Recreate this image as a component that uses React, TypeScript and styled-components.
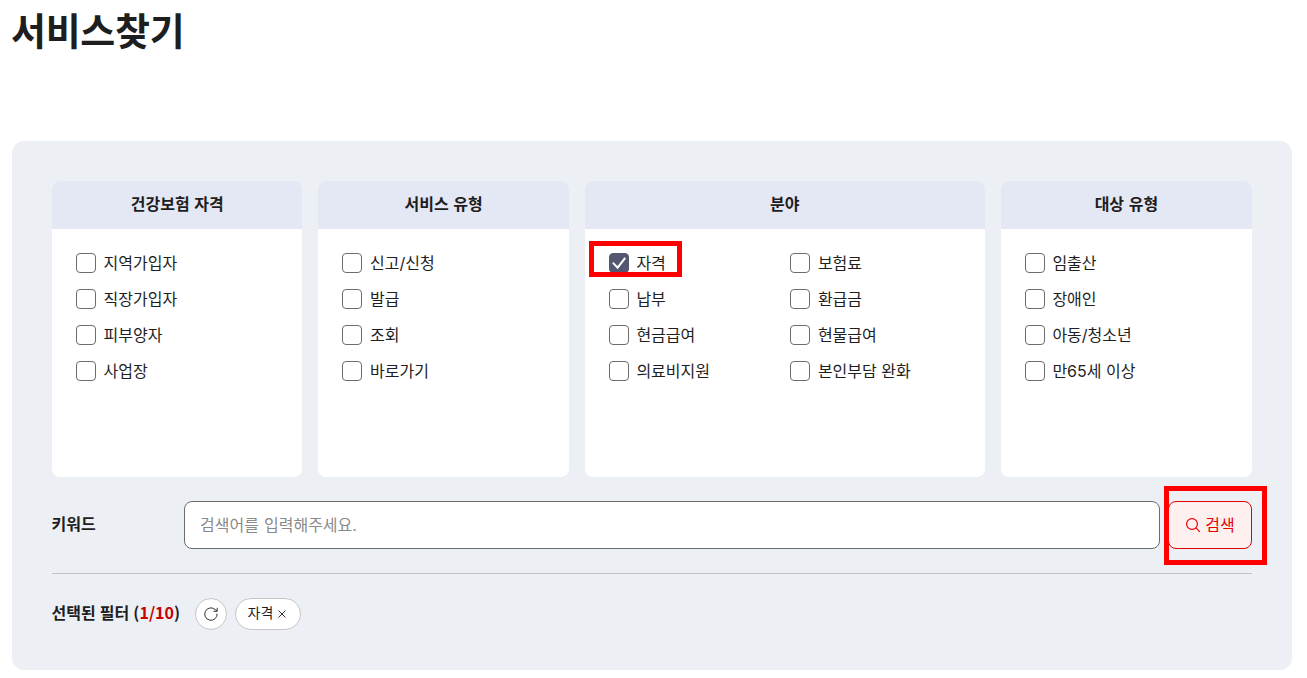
import React, { useState } from 'react'
import styled, { createGlobalStyle } from 'styled-components'

const GlobalStyle = createGlobalStyle`
  * {
    box-sizing: border-box;
  }

  body {
    margin: 0;
    background-color: #ffffff;
    color: #1e1e1e;
    font-family: Inter, 'Noto Sans CJK KR', sans-serif;
    font-size: 16px;
    line-height: 24px;
  }

  button,
  input {
    font-family: inherit;
    font-size: inherit;
  }
`

const Page = styled.main`
  width: 1280px;
  height: 678px;
  margin-left: 12px;
`

const PageTitle = styled.h1`
  height: 141px;
  margin: 0;
  font-family: 'Noto Sans CJK KR', sans-serif;
  font-size: 38px;
  font-weight: 700;
  letter-spacing: -0.3px;
  line-height: 57px;
  text-indent: -1px;
`

const FilterPanel = styled.section`
  height: 529px;
  padding: 40px;
  border-radius: 12px;
  background-color: #ecf0f5;
`

const GroupList = styled.div`
  display: grid;
  grid-template-columns: 250.4px 250.4px 400px 1fr;
  column-gap: 16px;
`

const Group = styled.fieldset`
  min-width: 0;
  height: 296px;
  margin: 0;
  padding: 0;
  border: none;
  border-radius: 8px;
  background-color: #ffffff;
  overflow: hidden;
`

const GroupTitle = styled.div`
  height: 48px;
  background-color: #e4e7f4;
  font-weight: 700;
  line-height: 46px;
  text-align: center;
  word-spacing: 0.8px;
`

const OptionGrid = styled.div<{ $wide?: boolean }>`
  display: grid;
  grid-template-columns: ${({ $wide }) => ($wide ? '181.5px 1fr' : '1fr')};
  grid-auto-rows: 24px;
  row-gap: 12px;
  padding: 22px 0 0 24px;
`

const OptionLabel = styled.label`
  position: relative;
  display: flex;
  align-items: center;
  gap: 7.6px;
  width: max-content;
  white-space: nowrap;

  input {
    appearance: none;
    width: 20px;
    height: 20px;
    margin: 0;
    border: 1px solid #6d6d6d;
    border-radius: 4px;
    background-color: #ffffff;
  }

  input:checked {
    border-color: #555770;
    background-color: #555770;
  }

  svg {
    position: absolute;
    top: 2px;
    left: 0;
    pointer-events: none;
  }

  span {
    padding-bottom: 1px;
  }
`

const Marker = styled.div<{
  $top: number
  $left: number
  $width: number
  $height: number
}>`
  position: absolute;
  top: ${({ $top }) => $top}px;
  left: ${({ $left }) => $left}px;
  width: ${({ $width }) => $width}px;
  height: ${({ $height }) => $height}px;
  border: 5px solid #ff0000;
  pointer-events: none;
`

const KeywordRow = styled.form`
  display: flex;
  align-items: center;
  height: 97px;
  padding: 24px 0;
  border-bottom: 1px solid #c0c4c9;
`

const KeywordLabel = styled.label`
  width: 132px;
  padding-bottom: 2px;
  font-weight: 700;
  text-indent: -0.5px;
`

const KeywordInput = styled.input`
  width: 976px;
  height: 48px;
  margin-right: 8px;
  padding: 0 15px 1px;
  border: 1px solid #6d6d6d;
  border-radius: 8px;
  background-color: #ffffff;
  outline: none;

  &::placeholder {
    color: #8a8a8a;
    opacity: 1;
    word-spacing: 0.6px;
  }
`

const SearchButton = styled.button`
  position: relative;
  display: flex;
  align-items: center;
  justify-content: center;
  gap: 4px;
  width: 84px;
  height: 48px;
  padding: 0;
  border: 1px solid #e60000;
  border-radius: 8px;
  background-color: #fff0f0;
  color: #e60000;

  span {
    padding-bottom: 3px;
  }
`

const SelectedRow = styled.div`
  display: flex;
  align-items: center;
  height: 32px;
  margin-top: 24px;
`

const SelectedTitle = styled.strong`
  width: 143px;
  padding-bottom: 5px;
  font-family: 'Noto Sans CJK KR', sans-serif;
  font-weight: 700;
  text-indent: -0.5px;
  white-space: nowrap;
  word-spacing: 0.5px;

  em {
    color: #c80000;
    font-style: normal;
  }
`

const ResetButton = styled.button`
  display: flex;
  align-items: center;
  justify-content: center;
  width: 32px;
  height: 32px;
  margin-right: 8px;
  padding: 0;
  border: 1px solid #c6c6c6;
  border-radius: 50%;
  background-color: #ffffff;
`

const FilterChip = styled.button`
  display: flex;
  align-items: center;
  gap: 4px;
  width: 66px;
  height: 32px;
  padding: 0 0 0 11.5px;
  border: 1px solid #c6c6c6;
  border-radius: 16px;
  background-color: #ffffff;
  color: #1e1e1e;
  font-size: 14px;

  span {
    padding-bottom: 5px;
  }
`

interface IFilterGroup {
  title: string
  options: string[]
  wide?: boolean
}

const groups: IFilterGroup[] = [
  {
    title: '건강보험 자격',
    options: ['지역가입자', '직장가입자', '피부양자', '사업장'],
  },
  {
    title: '서비스 유형',
    options: ['신고/신청', '발급', '조회', '바로가기'],
  },
  {
    title: '분야',
    wide: true,
    options: [
      '자격',
      '보험료',
      '납부',
      '환급금',
      '현금급여',
      '현물급여',
      '의료비지원',
      '본인부담 완화',
    ],
  },
  {
    title: '대상 유형',
    options: ['임출산', '장애인', '아동/청소년', '만65세 이상'],
  },
]

const MAX_FILTERS = 10

const CheckIcon: React.FC = () => (
  <svg width="20" height="20" viewBox="0 0 20 20" fill="none">
    <path d="M3.8 9.6L8.6 14.6L16.2 4.8" stroke="#fff" strokeWidth="2" />
  </svg>
)

const SearchIcon: React.FC = () => (
  <svg width="16" height="16" viewBox="0 0 16 16" fill="none">
    <circle cx="7" cy="7" r="5.4" stroke="currentColor" strokeWidth="1.2" />
    <path d="M10.9 10.9L14.8 14.8" stroke="currentColor" strokeWidth="1.2" />
  </svg>
)

const ResetIcon: React.FC = () => (
  <svg width="16" height="16" viewBox="0 0 16 16" fill="none" stroke="#333">
    <path d="M14.1 7.6A6.2 6.2 0 1 1 12.2 3.6L14 5" />
    <path d="M14.2 1.8V5.3H10.4" />
  </svg>
)

const CloseIcon: React.FC = () => (
  <svg width="10" height="10" viewBox="0 0 10 10" fill="none" stroke="#333">
    <path d="M1.5 1.5L8.5 8.5M8.5 1.5L1.5 8.5" />
  </svg>
)

const App: React.FC = () => {
  const [selected, setSelected] = useState<string[]>(['자격'])
  const [keyword, setKeyword] = useState('')

  const toggleOption = (option: string): void => {
    if (selected.includes(option)) {
      setSelected(selected.filter((item) => item !== option))
    } else if (selected.length < MAX_FILTERS) {
      setSelected([...selected, option])
    }
  }

  const submitHandler = (event: React.FormEvent<HTMLFormElement>): void => {
    event.preventDefault()
  }

  return (
    <>
      <GlobalStyle />
      <Page>
        <PageTitle>서비스찾기</PageTitle>
        <FilterPanel>
          <GroupList>
            {groups.map(({ title, options, wide }) => (
              <Group key={title}>
                <GroupTitle>{title}</GroupTitle>
                <OptionGrid $wide={wide}>
                  {options.map((option) => (
                    <OptionLabel key={option}>
                      <input
                        type="checkbox"
                        checked={selected.includes(option)}
                        onChange={() => toggleOption(option)}
                      />
                      {selected.includes(option) && <CheckIcon />}
                      <span>{option}</span>
                      {option === '자격' && (
                        <Marker $top={-10} $left={-20} $width={93} $height={36} />
                      )}
                    </OptionLabel>
                  ))}
                </OptionGrid>
              </Group>
            ))}
          </GroupList>
          <KeywordRow onSubmit={submitHandler}>
            <KeywordLabel htmlFor="keyword">키워드</KeywordLabel>
            <KeywordInput
              id="keyword"
              type="text"
              placeholder="검색어를 입력해주세요."
              value={keyword}
              onChange={(event) => setKeyword(event.currentTarget.value)}
            />
            <SearchButton type="submit">
              <SearchIcon />
              <span>검색</span>
              <Marker $top={-16} $left={-5} $width={103} $height={79} />
            </SearchButton>
          </KeywordRow>
          <SelectedRow>
            <SelectedTitle>
              선택된 필터 (
              <em>
                {selected.length}/{MAX_FILTERS}
              </em>
              )
            </SelectedTitle>
            <ResetButton
              type="button"
              aria-label="필터 초기화"
              onClick={() => setSelected([])}
            >
              <ResetIcon />
            </ResetButton>
            {selected.map((option) => (
              <FilterChip
                key={option}
                type="button"
                onClick={() => toggleOption(option)}
              >
                <span>{option}</span>
                <CloseIcon />
              </FilterChip>
            ))}
          </SelectedRow>
        </FilterPanel>
      </Page>
    </>
  )
}

export default App
